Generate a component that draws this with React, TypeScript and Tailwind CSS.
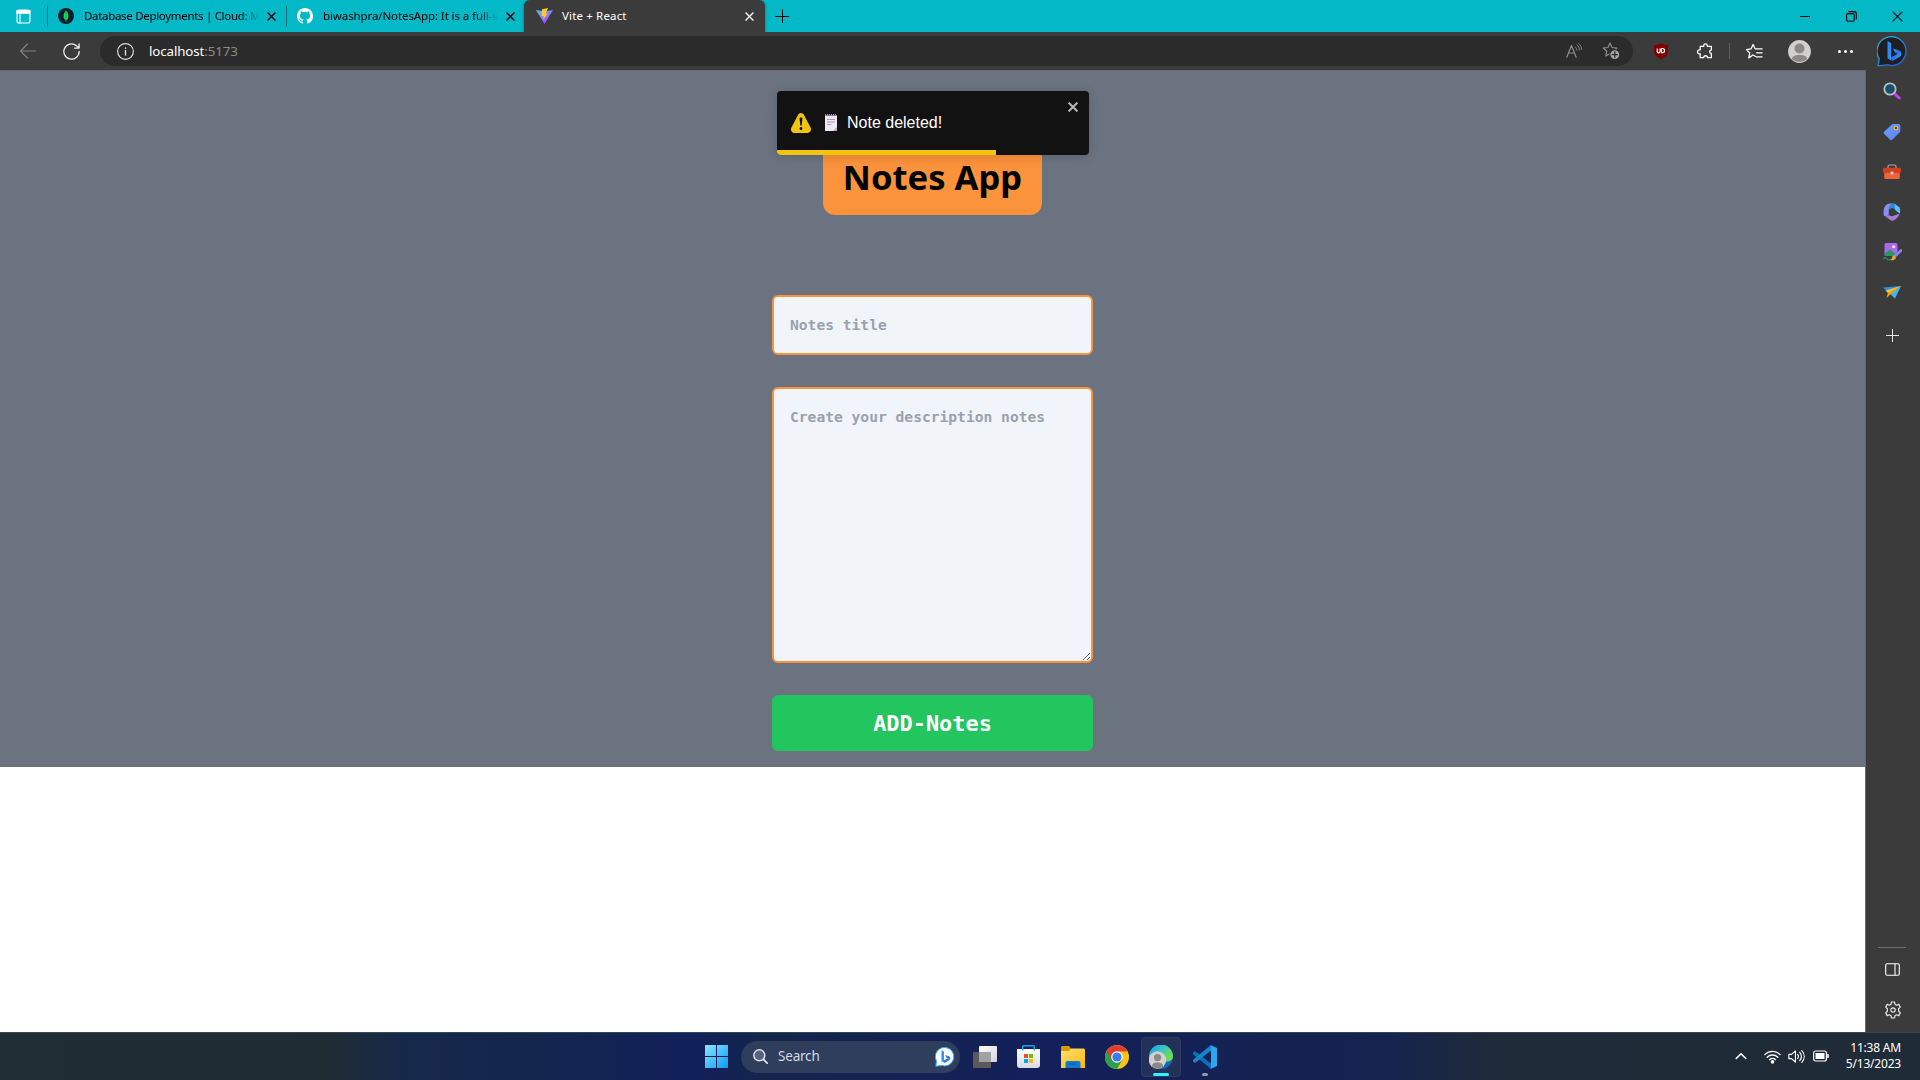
import type { ReactNode } from "react";

const UI = "font-['Noto_Sans','Open_Sans',sans-serif]";

function X({ size = 8, w = 1.5, className = "" }: { size?: number; w?: number; className?: string }) {
  return (
    <svg width={size} height={size} viewBox="0 0 10 10" className={className} stroke="currentColor" strokeWidth={w}>
      <path d="M.6.6l8.8 8.8M9.4.6L.6 9.4" />
    </svg>
  );
}

function Ico({ size = 16, box = 16, className = "", children }: { size?: number; box?: number; className?: string; children: ReactNode }) {
  return (
    <svg
      width={size}
      height={size}
      viewBox={`0 0 ${box} ${box}`}
      className={`shrink-0 ${className}`}
      fill="none"
      stroke="currentColor"
      strokeWidth="1.1"
      strokeLinecap="round"
      strokeLinejoin="round"
    >
      {children}
    </svg>
  );
}

function Gradients() {
  return (
    <svg width="0" height="0" className="absolute">
      <defs>
        <linearGradient id="vite" x1="0" y1="0" x2=".6" y2="1"><stop offset="0" stopColor="#41d1ff" /><stop offset="1" stopColor="#b838fe" /></linearGradient>
        <linearGradient id="bing" x1="0" y1="0" x2="1" y2="1"><stop offset="0" stopColor="#35a8ff" /><stop offset=".5" stopColor="#2a6bf2" /><stop offset="1" stopColor="#35d6e8" /></linearGradient>
        <linearGradient id="ring" x1="0" y1="0" x2="1" y2="1"><stop offset="0" stopColor="#27b9e8" /><stop offset="1" stopColor="#2457d6" /></linearGradient>
        <linearGradient id="win" x1="0" y1="0" x2="1" y2="1"><stop offset="0" stopColor="#8ae4ff" /><stop offset="1" stopColor="#0a9bf5" /></linearGradient>
        <linearGradient id="tag" x1="0" y1="0" x2="1" y2="1"><stop offset="0" stopColor="#5ea2f7" /><stop offset="1" stopColor="#6b7cf5" /></linearGradient>
        <linearGradient id="folder" x1="0" y1="0" x2="1" y2="1"><stop offset="0" stopColor="#ffdf73" /><stop offset="1" stopColor="#fbb80f" /></linearGradient>
        <linearGradient id="edge" x1="0" y1="0" x2="1" y2=".5"><stop offset="0" stopColor="#1f9be0" /><stop offset=".5" stopColor="#35c1cf" /><stop offset="1" stopColor="#6be04a" /></linearGradient>
        <linearGradient id="bag" x1="0" y1="0" x2="0" y2="1"><stop offset="0" stopColor="#fff" /><stop offset="1" stopColor="#d9dbe2" /></linearGradient>
        <linearGradient id="tv" x1="0" y1="0" x2="1" y2="1"><stop offset="0" stopColor="#fff" /><stop offset="1" stopColor="#d5d5d8" /></linearGradient>
      </defs>
    </svg>
  );
}

const BingB = () => (
  <g stroke="none">
    <path d="M4.500 5.500l1.500 3.200 2 1L3 12.500v2.700l1.300.2 6-3.600c1.400-1.600.8-4-.8-4.700z" fill="url(#bing)" />
    <path d="M0 .2C0-.1.500-.2.800 0L2.600 1c.3.200.4.500.4.800v13.300L.5 13.800c-.3-.2-.5-.5-.5-.9z" fill="#2b8cf5" />
  </g>
);

function TitleBar() {
  return (
    <header className="flex h-8 shrink-0 items-center bg-[#03b8c7] text-black">
      <div className="flex w-[47px] justify-center">
        <Ico size={15} box={15} className="text-white">
          <rect x="1" y="1" width="13" height="13" rx="2" />
          <path d="M1 1.500h13v2.800H1z" fill="#fff" />
          <path d="M4 4v10" />
        </Ico>
      </div>
      <div className="h-5 w-px bg-[#056e79]" />
      <div className="flex w-[238px] items-center pl-[10px]">
        <svg width="16" height="16" viewBox="0 0 16 16" className="shrink-0">
          <circle cx="8" cy="8" r="8" fill="#0b1f2c" />
          <path d="M8 2.500c3.500 4 3 8 .3 9.800V13.500h-.6v-1.200C5 10.500 4.500 6.500 8 2.500z" fill="#13e060" />
          <path d="M8 4v9.500" stroke="#0a8f3c" strokeWidth=".6" />
        </svg>
        <span className={`ml-[10px] w-[175px] text-[11.5px] tracking-[-0.31px] whitespace-nowrap ${UI} [mask-image:linear-gradient(to_right,black_90%,transparent)]`}>
          Database Deployments | Cloud: M
        </span>
        <X size={9} className="ml-[8px] shrink-0" />
      </div>
      <div className="h-5 w-px bg-[#056e79]" />
      <div className="flex w-[237px] items-center pl-[10px]">
        <svg width="16" height="16" viewBox="0 0 16 16" className="shrink-0" fill="#fff">
          <path d="M8 0C3.580 0 0 3.580 0 8c0 3.540 2.290 6.530 5.470 7.590.4.070.550-.170.550-.380 0-.190-.010-.820-.010-1.490-2.010.370-2.530-.490-2.690-.940-.090-.230-.480-.940-.820-1.130-.280-.150-.680-.520-.010-.530.630-.010 1.080.580 1.230.820.720 1.210 1.870.870 2.330.660.070-.520.280-.870.510-1.070-1.780-.2-3.640-.890-3.640-3.950 0-.870.310-1.590.820-2.150-.080-.2-.360-1.020.080-2.120 0 0 .670-.210 2.200.820a7.600 7.600 0 0 1 4 0c1.530-1.040 2.200-.820 2.200-.820.440 1.100.160 1.920.080 2.120.510.560.820 1.270.820 2.150 0 3.070-1.870 3.750-3.650 3.950.290.250.540.730.540 1.480 0 1.070-.010 1.930-.010 2.200 0 .210.150.460.550.380A8 8 0 0 0 16 8c0-4.420-3.580-8-8-8z" />
        </svg>
        <span className={`ml-[10px] w-[175px] text-[11.5px] tracking-[-0.1px] whitespace-nowrap ${UI} [mask-image:linear-gradient(to_right,black_88%,transparent)]`}>
          biwashpra/NotesApp: It is a full-s
        </span>
        <X size={9} className="ml-[8px] shrink-0" />
      </div>
      <div className="flex h-8 w-[241px] items-center rounded-t-[6px] bg-[#3b3b3b] pl-3 text-white shadow-[0_0_3px_rgba(0,0,0,0.4)]">
        <svg width="17" height="16" viewBox="0 0 17 16" className="shrink-0">
          <path d="M0 2l8.500 14L17 2 8.500 3.500z" fill="url(#vite)" />
          <path d="M12 0L6 1.200l-.4 7.300 2.200-.4-.7 3.600 4.600-6.200-2 .3z" fill="#ffc928" />
        </svg>
        <span className={`ml-[9px] w-[183px] text-[11.5px] tracking-[0.15px] whitespace-nowrap ${UI}`}>Vite + React</span>
        <X size={9} />
      </div>
      <Ico size={14} box={14} className="ml-[10px]"><path d="M7.500.5v14M.5 7.500h14" strokeLinecap="butt" strokeWidth="1" /></Ico>
      <div className="ml-auto flex">
        <div className="flex w-[46px] items-center justify-center"><div className="h-px w-[10px] bg-black" /></div>
        <div className="flex w-[46px] justify-center">
          <Ico size={11} box={11}><rect x=".6" y="2.600" width="7.600" height="7.600" rx="1.200" /><path d="M3 .6h5c1.400 0 2.300.9 2.300 2.300v5" /></Ico>
        </div>
        <div className="flex w-[46px] justify-center"><X size={11} w={1} /></div>
      </div>
    </header>
  );
}

const STAR = "M8 1l2 4.500 4.800.5-3.600 3.200 1 4.800L8 11.600 3.800 14l1-4.800L1.200 6 6 5.500z";

function Toolbar() {
  return (
    <div className="flex h-[38px] shrink-0 items-center bg-[#3b3b3b] text-white">
      <div className="flex w-14 justify-center"><Ico className="text-[#838383]"><path d="M15.500 8H.8M7.500 1L.6 8l6.900 7" /></Ico></div>
      <div className="flex w-8 justify-center pr-px"><Ico className="text-[#eee]" size={17} box={16}><path d="M15.200 8a7.200 7.200 0 1 1-2.600-5.500L15 4.500M15.200.8v4h-4.400" strokeWidth="1.200" /></Ico></div>
      <div className={`ml-3 flex h-[30px] w-[1533px] items-center rounded-full bg-[#2b2b2b] pl-[17px] ${UI}`}>
        <Ico size={17} className="text-[#ddd]"><circle cx="8" cy="8" r="7.400" /><path d="M8 7v4.300M8 4.700v.2" strokeWidth="1.300" /></Ico>
        <span className="mt-px ml-[15px] text-[13.300px] tracking-[-0.1px]">localhost<span className="text-[#8c8c8c]">:5173</span></span>
        <div className="ml-auto flex items-center pr-[13px] text-[#8d8d8d]">
          <Ico size={16} className="mr-5"><path d="M.8 14.200L5.500 2.500l4.700 11.700M2.500 10h6" strokeWidth="1.200" /><path d="M9.500 4c1 .8 1.500 1.800 1.500 3M11 2c1.700 1.200 2.500 2.800 2.500 5M12.600.6c1.900 1.400 2.900 3.500 2.900 5.800" strokeWidth=".9" /></Ico>
          <Ico size={18} box={18}>
            <path d={STAR} strokeWidth="1.200" />
            <circle cx="12.800" cy="12.600" r="5" fill="#a5a5a5" stroke="#2b2b2b" />
            <path d="M12.800 10v5.200M10.200 12.600h5.200" stroke="#2b2b2b" strokeWidth="1.300" />
          </Ico>
        </div>
      </div>
      <div className="ml-1.5 flex w-11 justify-center">
        <svg width="14" height="16" viewBox="0 0 14 16">
          <path d="M7 0c2 1.500 4.500 2 7 2v6c0 4-3.500 6.500-7 8-3.500-1.500-7-4-7-8V2c2.500 0 5-.5 7-2z" fill="#800000" />
          <path d="M3.200 5.500v3a1.300 1.300 0 0 0 2.800 0v-3M7.500 5.500v4.200h1a2.100 2.100 0 0 0 0-4.200z" fill="none" stroke="#fff" strokeWidth="1.200" />
        </svg>
      </div>
      <div className="flex w-11 justify-center pl-px">
        <Ico size={17}><path d="M3 3.200h3.300V2.500a1.700 1.700 0 0 1 3.400 0v.7H13.500V6.600a1.600 1.600 0 1 0 0 3.200v4H9.900a1.800 1.800 0 0 0-3.600 0H3v-3.700a1.900 1.900 0 1 1 0-3.600z" strokeWidth="1.200" /></Ico>
      </div>
      <div className="ml-0.5 h-4 w-px bg-[#5c5c5c]" />
      <div className="ml-[2px] flex w-11 justify-center">
        <Ico size={17}><path d="M10 13.200L6.500 11.300 2.600 14l.9-4.600L.4 6.200l4.300-.6L6.700 1.400l2 4.200h6.500M10 9.200h5.200M10.500 13h4.700" strokeWidth="1.200" /></Ico>
      </div>
      <div className="flex w-[46px] justify-center">
        <svg width="23" height="23" viewBox="0 0 23 23">
          <circle cx="11.500" cy="11.500" r="11.400" fill="#d2d0cd" />
          <circle cx="11.500" cy="8.500" r="5" fill="#8b8986" />
          <path d="M4 19.200c0-3.200 3-4.200 7.500-4.200s7.500 1 7.500 4.200a11.400 11.400 0 0 1-15 0z" fill="#8b8986" />
        </svg>
      </div>
      <div className="flex w-[46px] justify-center gap-[3px]">
        <i className="size-[3px] rounded-full bg-white" /><i className="size-[3px] rounded-full bg-white" /><i className="size-[3px] rounded-full bg-white" />
      </div>
      <div className="flex w-12 justify-center">
        <svg width="31" height="31" viewBox="0 0 31 31">
          <path d="M1 29.800l1.200-7A14.500 14.500 0 1 1 15.500 29.600c-2 0-3-.3-5-.8z" fill="#1d1f22" stroke="url(#ring)" strokeWidth="1.300" />
          <g transform="translate(10.500 5.500) scale(1.250)"><BingB /></g>
        </svg>
      </div>
    </div>
  );
}

function Toast() {
  return (
    <div className="absolute top-5 left-[777px] h-16 w-[312px] overflow-hidden rounded-[4px] bg-[#121212] text-white shadow-[0_1px_10px_rgba(0,0,0,0.1),0_2px_15px_rgba(0,0,0,0.05)]">
      <div className="flex h-full items-center pl-[14px]">
        <svg width="20" height="20" viewBox="0 0 24 24" fill="#f1c40f">
          <path d="M23.320 17.191L15.438 2.184C14.728.833 13.416 0 11.996 0c-1.420 0-2.733.833-3.443 2.184L.533 17.448a4.744 4.744 0 0 0 0 4.368C1.243 23.167 2.555 24 3.975 24h16.050C22.220 24 24 22.044 24 19.632c0-.904-.251-1.746-.680-2.440zm-9.622 1.460c0 1.033-.724 1.823-1.698 1.823s-1.698-.790-1.698-1.822v-.043c0-1.028.724-1.822 1.698-1.822s1.698.790 1.698 1.822v.043zm.039-12.285l-.840 8.060c-.057.581-.408.943-.897.943-.490 0-.840-.367-.896-.942l-.840-8.065c-.057-.624.250-1.095.779-1.095h1.910c.528.005.840.476.784 1.100z" />
        </svg>
        <svg width="12" height="17" viewBox="0 0 12 17" className="mb-px ml-[14px]">
          <path d="M0 1.500h12V17H0z" fill="#efe7f6" />
          <path d="M12 13v4H8z" fill="#b9adc7" />
          <path d="M0 .8h12" stroke="#a69bb5" strokeWidth="1.600" strokeDasharray="1 1" />
          <path d="M2 5.500h8M2 8h8M2 10.500h4.500" stroke="#9d91ad" strokeWidth=".9" />
        </svg>
        <span className="ml-[10px] font-['Liberation_Sans',Arial,sans-serif] text-[16px] leading-6">Note deleted!</span>
      </div>
      <X size={10} w={2} className="absolute top-[11px] right-[11px] text-[#b8b8b8]" />
      <div className="absolute bottom-0 left-0 h-[5px] w-[218.500px] bg-[#f1c40f]" />
    </div>
  );
}

const MONO = "font-['DejaVu_Sans_Mono',monospace] font-bold";

function Page() {
  return (
    <main className="relative h-full w-[1866px] border-t border-r border-[#66676a] bg-white">
      <div className="flex flex-col items-center bg-[#6b7280] pt-16 pb-4">
        <h1 className={`flex h-20 w-[219px] items-center justify-center rounded-xl bg-[#fb923c] pt-[3px] text-[34.600px] leading-10 font-bold whitespace-nowrap text-black ${UI}`}>
          Notes App
        </h1>
        <input
          placeholder="Notes title"
          className={`mt-20 h-[60px] w-[321px] rounded-md border-2 border-[#fb923c] bg-slate-100 px-4 pb-0.5 text-[14.620px] placeholder:text-gray-400 ${MONO}`}
        />
        <textarea
          placeholder="Create your description notes"
          className={`mt-8 h-[276px] w-[321px] resize rounded-md border-2 border-[#fb923c] bg-slate-100 p-4 text-[14.620px] leading-6 placeholder:text-gray-400 ${MONO}`}
        />
        <button className={`mt-8 h-14 w-[321px] rounded-md bg-[#22c55e] pt-0.5 text-[21.920px] text-white ${MONO}`}>ADD-Notes</button>
      </div>
      <Toast />
    </main>
  );
}

function SideBar() {
  return (
    <aside className="flex w-[54px] flex-col items-center bg-[#3b3b3b] pt-3 pr-0.5 text-[#e6e6e6]">
      <svg width="18" height="18" viewBox="0 0 18 18">
        <circle cx="7" cy="7" r="5.700" fill="#17506e" stroke="#bdbdbd" strokeWidth="1.800" />
        <path d="M10.800 11l1.500 1.500" stroke="#bbb" strokeWidth="1.800" />
        <path d="M12.500 12.500l3.800 3.500" stroke="#c23ff0" strokeWidth="3" strokeLinecap="round" />
      </svg>
      <svg width="18" height="18" viewBox="0 0 18 18" className="mt-[23px]">
        <path d="M9.500 1h6a1.800 1.800 0 0 1 1.800 1.800v6L9.500 16.500a1.800 1.800 0 0 1-2.600 0L1.300 11a1.800 1.800 0 0 1 0-2.600z" fill="url(#tag)" />
        <circle cx="13" cy="5" r="1.700" fill="#2a3970" stroke="#e9b90d" strokeWidth="1.300" />
      </svg>
      <svg width="18" height="16" viewBox="0 0 18 16" className="mt-[23px]">
        <path d="M5 4V2.500C5 1.500 5.500 1 6.500 1h5c1 0 1.500.5 1.500 1.500V4" fill="none" stroke="#a8a8a8" strokeWidth="1.200" />
        <rect x="1.200" y="6" width="15.600" height="9" rx="1.500" fill="#f0623a" />
        <rect x="0" y="3.800" width="18" height="5.200" rx="1.200" fill="#d3401c" />
        <circle cx="9" cy="9" r="1.700" fill="#c9c9c9" />
      </svg>
      <svg width="18" height="18" viewBox="0 0 18 18" className="mt-[23px]">
        <path d="M9.500.3L5.500.8C3 1.500 1 4 .7 7L.5 11c.3 1.500 1 2 2 2.500l3.300-1.200V6.500C6 4 7.500 1.500 9.500.3z" fill="#8d8ff0" />
        <path d="M9.500.3C7.500 1.500 6 4 5.900 6.500L9.500 5l7.200 5.500c.8-1.500.6-4.500-.5-6.200L11.500.8C10.800.3 10.200.2 9.500.3z" fill="#2f86e0" />
        <path d="M11.500.8l4.700 3.500c1.100 1.700 1.300 4.700.5 6.200L12.200 7z" fill="#55c0f5" />
        <path d="M2.500 13.500l3.300-1.200 3.500.9 7.400-2.700c-.5 2.500-2.700 5-5.700 6.700-1.300.6-2.500.6-3.500 0z" fill="#a77bdc" />
        <path d="M6 7l3.500-2 3.300 2.500-.5 3.600L9.200 13l-3.300-1z" fill="#3b3b3b" />
      </svg>
      <svg width="19" height="18" viewBox="0 0 19 18" className="mt-[22px] ml-px">
        <rect x="1.500" y="0" width="13" height="13" rx="1.500" fill="#a968ee" />
        <path d="M1.500 10.500L7 6.500l6 4.500-1.500 2h-8.500c-.8 0-1.500-.7-1.500-1.500z" fill="#2c9561" />
        <circle cx="10.700" cy="3.800" r="1.500" fill="#f8e9ff" />
        <path d="M0 16c2-2 3.500-1 4 0s2 1 4 .5" stroke="#1b9a67" strokeWidth="1.300" fill="none" />
        <path d="M18 7.500L11.500 13.500" stroke="#8b83f2" strokeWidth="2.800" strokeLinecap="round" />
        <path d="M10.500 12.500l2.500 2.500c-1 2-3 2.500-5.500 2.200 1.500-1 1-3.700 3-4.700z" fill="#f3ad17" />
      </svg>
      <svg width="18" height="13" viewBox="0 0 18 13" className="mt-[25px]">
        <path d="M0 1.500L18 0 6 7.500z" fill="#2b93e6" />
        <path d="M18 0L12 12.500 6 7z" fill="#41b4f5" />
        <path d="M18 0L5 6.500 3.500 12 8 8z" fill="#e9a310" />
        <path d="M2.500 4.500L5 7 18 0z" fill="#f9c22c" />
      </svg>
      <Ico size={13} box={13} className="mt-[30px]"><path d="M6.500 0v13M0 6.500h13" strokeLinecap="butt" strokeWidth="1" /></Ico>
      <div className="mt-auto h-px w-7 bg-[#6d6d6d]" />
      <Ico size={15} box={15} className="mt-[14px] ml-px text-white"><rect x=".7" y="1.700" width="13.600" height="11.600" rx="1.500" /><path d="M10 2v11" /></Ico>
      <svg width="18" height="18" viewBox="0 0 18 18" fill="none" stroke="#e6e6e6" strokeWidth="1.200" strokeLinejoin="round" className="mt-[24px] mb-[13px] ml-px">
        <path d="M7.500 1h3l.5 2.300 1.500.9 2.300-.8 1.500 2.700-1.700 1.600v2.600l1.700 1.600-1.500 2.700-2.300-.8-1.500.9-.5 2.300h-3L7 14.700l-1.500-.9-2.300.8-1.500-2.700 1.700-1.600V7.700L1.700 6.100l1.500-2.700 2.300.8L7 3.300z" />
        <circle cx="9" cy="9" r="2.200" />
      </svg>
    </aside>
  );
}

function Cell({ children }: { children: ReactNode }) {
  return <div className="flex w-11 shrink-0 items-center justify-center">{children}</div>;
}

function TaskBar() {
  return (
    <footer
      className={`flex h-12 shrink-0 border-t border-[#3c4650] bg-[linear-gradient(90deg,#1f2d35_0%,#202c34_17%,#16284a_21%,#14254f_29%,#12205a_36%,#14254c_40%,#13205a_54%,#15234e_72%,#1f2b38_78%,#1f2b36_100%)] text-white ${UI}`}
    >
      <div className="ml-[694px] flex">
        <Cell>
          <svg width="23" height="23" viewBox="0 0 23 23" fill="url(#win)">
            <path d="M0 0h11v11H0zM12 0h11v11H12zM0 12h11v11H0zM12 12h11v11H12z" />
          </svg>
        </Cell>
        <div className="my-auto ml-[3px] flex h-8 w-[219px] items-center rounded-full bg-[#2f3e5c] pl-3">
          <Ico size={15} box={15} className="text-[#dde1ea]"><circle cx="6.300" cy="6.300" r="5.500" fill="#56627a" strokeWidth="1.500" /><path d="M10.500 10.500l3.700 3.700" strokeWidth="1.800" /></Ico>
          <span className="ml-[10px] text-[13.500px] tracking-[-0.2px] text-[#d3d8e2]">Search</span>
          <svg width="20" height="20" viewBox="0 0 20 20" className="mr-[5px] ml-auto">
            <path d="M.8 19.200l.6-5A9.300 9.300 0 1 1 10 19l-3-.5z" fill="#fff" stroke="#2aa5ee" strokeWidth="1" />
            <g transform="translate(6.500 3.500) scale(.8)"><BingB /></g>
          </svg>
        </div>
        <div className="ml-[3px] flex">
          <Cell>
            <svg width="24" height="22" viewBox="0 0 24 22"><rect x="6" y="0" width="18" height="16" rx="1" fill="url(#tv)" /><rect x="0" y="6" width="18" height="16" rx="1" fill="#5a5a5c" /><path d="M6 6h12v10H6z" fill="#a2a2a5" /></svg>
          </Cell>
          <Cell>
            <svg width="23" height="23" viewBox="0 0 23 23" className="mr-px">
              <path d="M0 4h23v16a3 3 0 0 1-3 3H3a3 3 0 0 1-3-3z" fill="url(#bag)" />
              <path d="M5.700 5.500V1.800c0-.6.400-1 1-1h9.600c.6 0 1 .4 1 1v3.700" fill="none" stroke="#1fa0e8" strokeWidth="1.600" />
              <path d="M7 9h4v4H7z" fill="#f04e23" /><path d="M12 9h4v4h-4z" fill="#7fb900" /><path d="M7 14h4v4H7z" fill="#03a3ee" /><path d="M12 14h4v4h-4z" fill="#ffb800" />
            </svg>
          </Cell>
          <Cell>
            <svg width="24" height="22" viewBox="0 0 24 22">
              <path d="M0 1.500C0 .7.700 0 1.500 0H8l2 2.500V7H0z" fill="#d99a06" />
              <path d="M0 5h8l2-2.500h12.500c.8 0 1.500.7 1.500 1.500v18H0z" fill="url(#folder)" />
              <path d="M4.500 22v-5a2 2 0 0 1 2-2h11a2 2 0 0 1 2 2v5z" fill="#1277cf" /><path d="M8 18h8" stroke="#0a5ca8" />
            </svg>
          </Cell>
          <Cell>
            <svg width="24" height="24" viewBox="0 0 24 24">
              <circle cx="12" cy="12" r="12" fill="#fbc41b" />
              <path d="M1.600 6A12 12 0 0 0 12 24l5.200-9L12 12z" fill="#2da04b" />
              <path d="M1.600 6A12 12 0 0 1 22.400 6.500H12L6.800 15z" fill="#e33b2e" />
              <circle cx="12" cy="12" r="5.800" fill="#fff" /><circle cx="12" cy="12" r="4.600" fill="#3a7cec" />
            </svg>
          </Cell>
          <Cell>
            <div className="flex size-10 flex-col items-center rounded-[4px] border border-[#2e3c66] bg-[#233158] pt-[7px]">
              <svg width="24" height="24" viewBox="0 0 24 24" className="shrink-0">
                <circle cx="12" cy="12" r="12" fill="#1565b8" />
                <path d="M0 12A12 12 0 0 1 24 11c0 4-3 5.500-6 5.500S13.500 14 14 12 9 6.500 0 12z" fill="url(#edge)" />
                <circle cx="8.500" cy="15" r="8.700" fill="#d3d1ce" /><circle cx="8.500" cy="12.600" r="3.600" fill="#8b8986" />
                <path d="M3 21.500c0-3 2-4 5.500-4s5.500 1 5.500 4a8.700 8.700 0 0 1-11 0z" fill="#8b8986" />
              </svg>
              <div className="mt-1 h-[3px] w-4 shrink-0 rounded-full bg-[#2ff3ff]" />
            </div>
          </Cell>
          <Cell>
            <div className="flex h-10 flex-col items-center pt-2">
              <svg width="24" height="24" viewBox="0 0 24 24" className="shrink-0">
                <path d="M0 7.500L2 6l16 12.500V24L0 9.200z" fill="#0a6fb8" />
                <path d="M0 16.500L2 18 18 5.500V0L0 14.800z" fill="#1585cf" />
                <path d="M17.500 0L24 3v18l-6.500 3c-.5 0 .5-.5.500-2V2c0-1.500-1-2-.5-2z" fill="#2ba6f0" />
              </svg>
              <div className="mt-1 h-[3px] w-1.5 shrink-0 rounded-full bg-[#9298ab]" />
            </div>
          </Cell>
        </div>
      </div>
      <div className="ml-auto flex items-center pr-[19px] pb-px">
        <Ico size={12} box={12} className="mr-[17px]"><path d="M1.200 8.500L6 3.700l4.800 4.800" strokeWidth="1.600" /></Ico>
        <Ico size={17} box={16} className="mr-[7px]">
          <path d="M.8 6.200a10.200 10.200 0 0 1 14.400 0M3 8.700a7 7 0 0 1 10 0M5.200 11a4 4 0 0 1 5.600 0" strokeWidth="1.200" /><circle cx="8" cy="13" r="1.200" fill="#fff" />
        </Ico>
        <Ico size={17} box={16} className="mr-[8px]"><path d="M.8 6v4h2.500L7 13.200V2.800L3.300 6zM9 6c1 1.200 1 2.800 0 4M11 4.200c2 2.300 2 5.300 0 7.600M13 2.500c3 3.300 3 7.700 0 11" /></Ico>
        <svg width="16" height="12" viewBox="0 0 16 12" fill="none" stroke="#fff" strokeWidth="1.200"><rect x=".6" y="1" width="12.800" height="10" rx="2" /><rect x="2.500" y="3" width="9" height="6" fill="#fff" stroke="none" /><path d="M15 4v4" strokeWidth="1.600" /></svg>
        <div className="ml-[16px] w-[56px] text-right text-[12px] leading-4 tracking-[-0.2px] whitespace-nowrap">
          <div>11:38 AM</div>
          <div>5/13/2023</div>
        </div>
      </div>
    </footer>
  );
}

export default function App() {
  return (
    <div className="flex h-[1080px] w-[1920px] flex-col overflow-hidden bg-[#3b3b3b]">
      <Gradients />
      <TitleBar />
      <Toolbar />
      <div className="flex min-h-0 flex-1">
        <Page />
        <SideBar />
      </div>
      <TaskBar />
    </div>
  );
}
